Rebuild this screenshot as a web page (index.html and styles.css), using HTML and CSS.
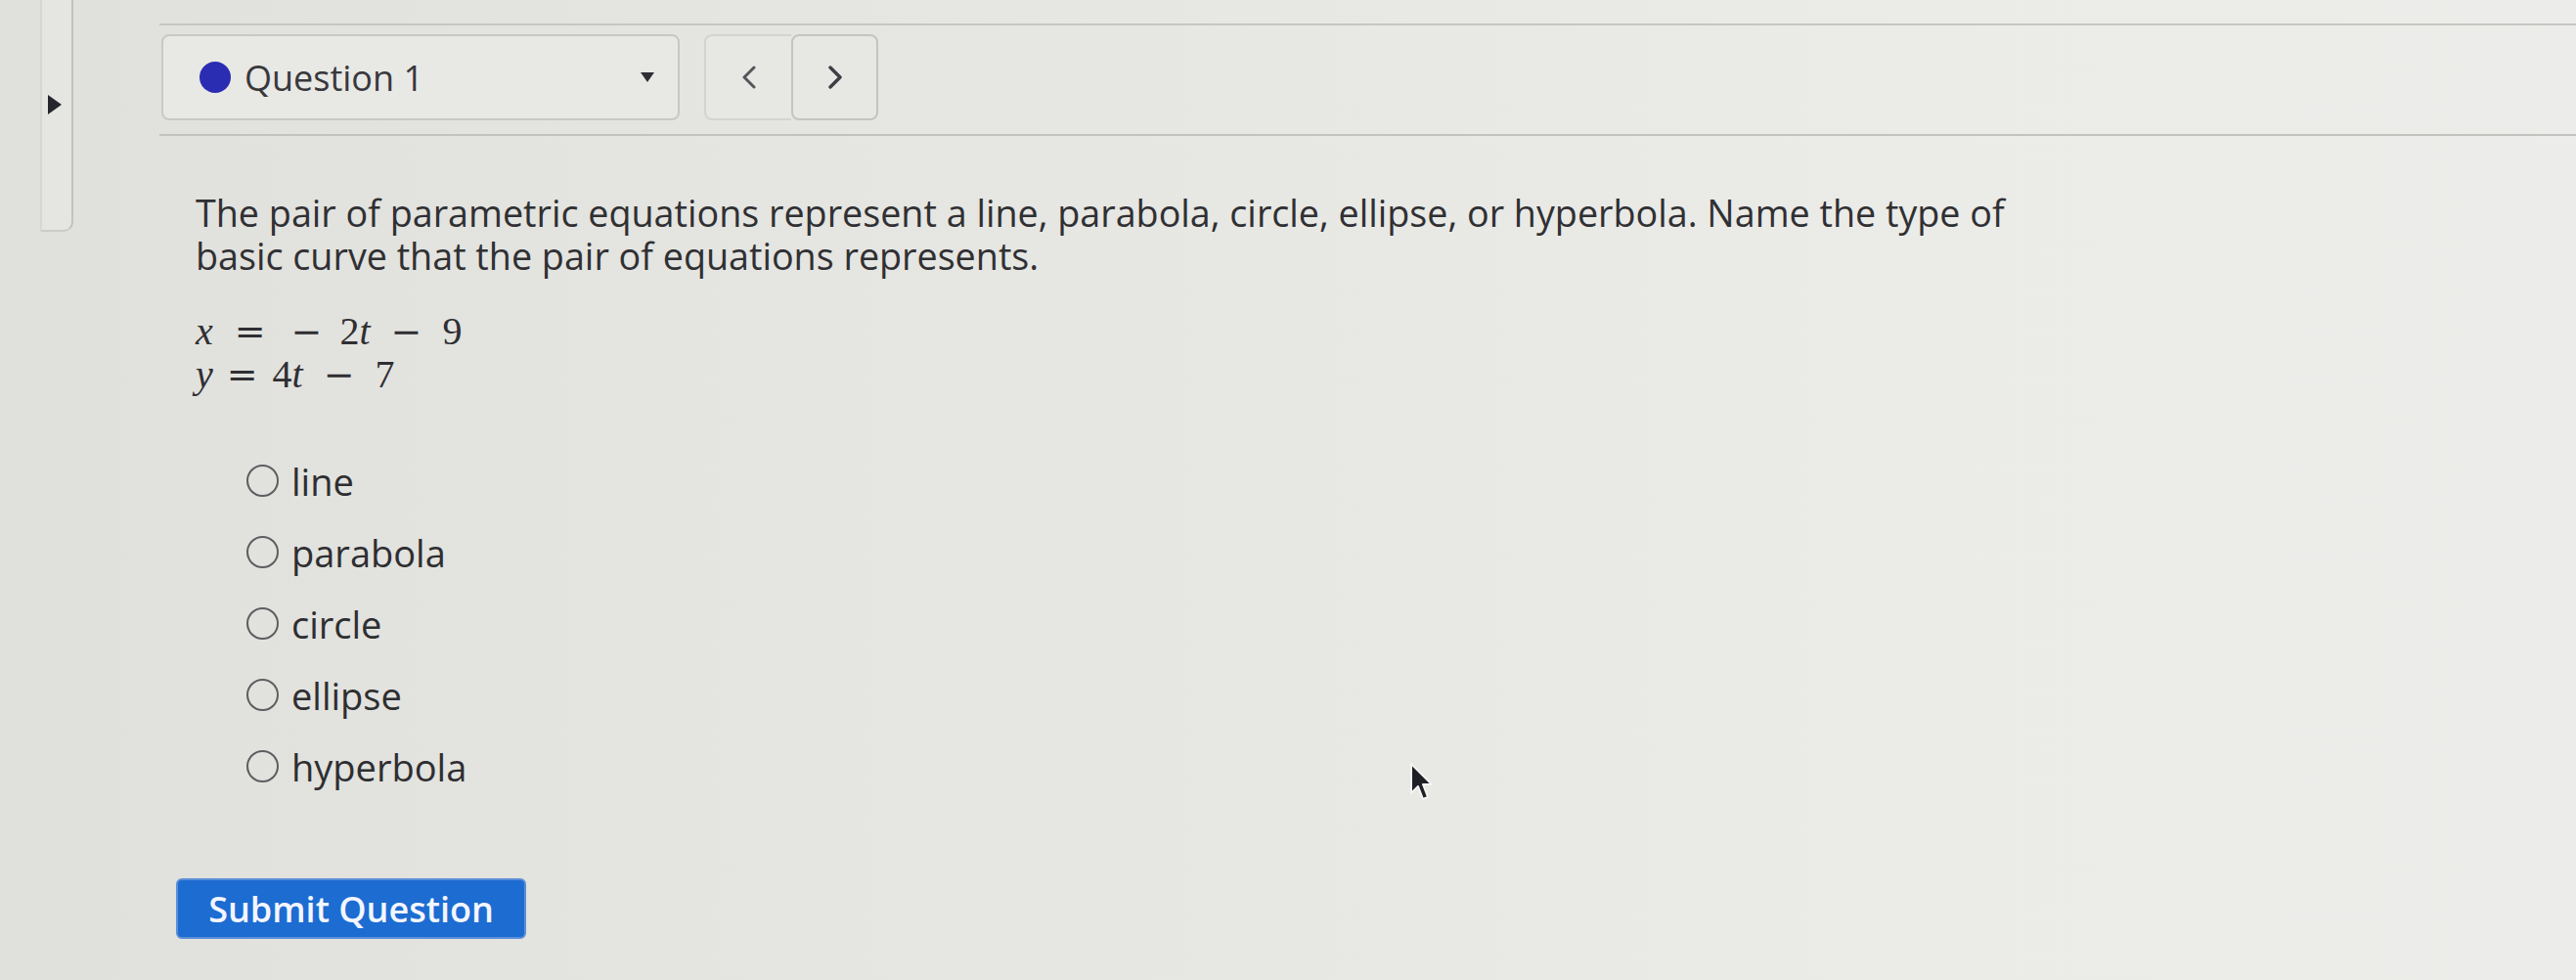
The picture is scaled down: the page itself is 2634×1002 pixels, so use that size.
FILE: index.html
```html
<!DOCTYPE html>
<html lang="en">
<head>
    <meta charset="UTF-8">
    <meta name="viewport" content="width=device-width, initial-scale=1.0">
    <title>Question 1</title>
    <link rel="stylesheet" href="styles.css">
</head>
<body>
  <div class="page">
    <aside class="sidebar">
      <span class="sidebar-toggle"></span>
    </aside>
    <main class="main">
      <div class="question-nav">
        <div class="question-select">
          <span class="status-dot"></span>
          <span class="question-label">Question 1</span>
          <span class="caret"></span>
        </div>
        <div class="nav-buttons">
          <button class="nav-btn prev" aria-label="Previous question">
            <svg width="16" height="24" viewBox="0 0 16 24"><path d="M13 2 L3 12 L13 22" fill="none" stroke="#55555a" stroke-width="3" stroke-linecap="round" stroke-linejoin="round"/></svg>
          </button>
          <button class="nav-btn next" aria-label="Next question">
            <svg width="16" height="24" viewBox="0 0 16 24"><path d="M3 2 L13 12 L3 22" fill="none" stroke="#3e3e44" stroke-width="3.4" stroke-linecap="round" stroke-linejoin="round"/></svg>
          </button>
        </div>
      </div>

      <div class="question-body">
        <p class="prompt">The pair of parametric equations represent a line, parabola, circle, ellipse, or hyperbola. Name the type of basic curve that the pair of equations represents.</p>

        <div class="math">
          <div class="eq">
            <span class="mi">x</span><span class="mo rel">=</span><span class="mo unary">&minus;</span><span class="mn">2</span><span class="mi">t</span><span class="mo bin">&minus;</span><span class="mn">9</span>
          </div>
          <div class="eq">
            <span class="mi">y</span><span class="mo rel tight">=</span><span class="mn">4</span><span class="mi">t</span><span class="mo bin">&minus;</span><span class="mn">7</span>
          </div>
        </div>

        <ul class="choices">
          <li><span class="radio"></span>line</li>
          <li><span class="radio"></span>parabola</li>
          <li><span class="radio"></span>circle</li>
          <li><span class="radio"></span>ellipse</li>
          <li><span class="radio"></span>hyperbola</li>
        </ul>

        <button class="submit-btn">Submit Question</button>
      </div>
    </main>
  </div>

  <svg class="cursor" width="26" height="42" viewBox="0 0 26 42">
    <path d="M2 2 L2 32 L9 25 L14 38 L19 36 L14 23 L23 23 Z" fill="#1f1f26" stroke="#f4f4f4" stroke-width="2" stroke-linejoin="round"/>
  </svg>
</body>
</html>
```

FILE: styles.css
```css
body {
  margin: 0;
  width: 2634px;
  height: 1002px;
  overflow: hidden;
  font-family: 'Open Sans', 'Noto Sans', sans-serif;
  color: #303033;
  background: linear-gradient(90deg, #e0e0dc 0%, #e6e6e2 40%, #ebebe8 75%, #ececea 100%);
  position: relative;
}
.page {
  display: flex;
  align-items: flex-start;
}
.sidebar {
  box-sizing: border-box;
  width: 34px;
  height: 237px;
  margin-left: 41px;
  border-left: 2px solid #d6d6d2;
  border-right: 2px solid #c2c2be;
  border-bottom: 2px solid #cbcbc7;
  border-radius: 0 0 10px 0;
  background-color: #e5e5e1;
  padding: 97px 0 0 6px;
}
.sidebar-toggle {
  display: block;
  width: 0;
  height: 0;
  border-left: 14px solid #25252d;
  border-top: 10px solid transparent;
  border-bottom: 10px solid transparent;
}
.main {
  flex: 1;
  margin-left: 88px;
  padding-top: 24px;
}
.question-nav {
  display: flex;
  gap: 25px;
  padding: 9px 0 14px 2px;
  border-top: 2px solid #c6c6c2;
  border-bottom: 2px solid #c2c2be;
}
.question-select {
  box-sizing: border-box;
  width: 530px;
  height: 88px;
  display: flex;
  align-items: center;
  padding-left: 37px;
  border: 2px solid #c8c8c4;
  border-radius: 8px;
  background-color: #e8e8e5;
}
.status-dot {
  width: 32px;
  height: 32px;
  border-radius: 50%;
  background-color: #2a2db2;
  margin-right: 14px;
}
.question-label {
  font-size: 36px;
  color: #38383c;
}
.caret {
  margin-left: auto;
  margin-right: 24px;
  width: 0;
  height: 0;
  border-left: 7px solid transparent;
  border-right: 7px solid transparent;
  border-top: 10px solid #2e2e34;
}
.nav-buttons {
  display: flex;
}
.nav-btn {
  box-sizing: border-box;
  width: 89px;
  height: 88px;
  display: flex;
  align-items: center;
  justify-content: center;
  background-color: #e7e7e4;
  border: 2px solid #c4c4c0;
  border-radius: 8px;
  padding: 0;
}
.nav-btn.prev {
  border-color: #d4d4d0;
  border-right: none;
  border-radius: 8px 0 0 8px;
}
.question-body {
  padding-left: 37px;
}
.prompt {
  margin: 57px 0 0 0;
  max-width: 1900px;
  font-size: 37.7px;
  line-height: 44px;
}
.math {
  margin-top: 33px;
  font-family: 'Liberation Serif', serif;
  font-size: 40px;
  line-height: 44px;
  color: #2f2f33;
}
.eq {
  white-space: nowrap;
}
.mi {
  font-style: italic;
}
.mo {
  font-family: 'DejaVu Serif', serif;
  font-size: 38px;
}
.mo.rel {
  margin: 0 26px 0 22px;
}
.mo.rel.tight {
  margin: 0 15px 0 14px;
}
.mo.unary {
  margin-right: 18px;
}
.mo.bin {
  margin: 0 21px;
}
.choices {
  list-style: none;
  margin: 50px 0 0 0;
  padding: 0 0 0 52px;
}
.choices li {
  height: 73px;
  display: flex;
  align-items: center;
  font-size: 38px;
  color: #2e2e31;
}
.radio {
  box-sizing: border-box;
  width: 33px;
  height: 33px;
  border: 2.5px solid #5e5e62;
  border-radius: 50%;
  margin-right: 13px;
}
.submit-btn {
  display: block;
  box-sizing: border-box;
  width: 358px;
  height: 62px;
  margin: 78px 0 0 -20px;
  padding: 0;
  font-family: 'Open Sans', sans-serif;
  font-size: 36px;
  font-weight: 600;
  color: #f4f6ff;
  background-color: #1c6cd2;
  border: 2px solid #5c8fd8;
  border-radius: 6px;
}
.cursor {
  position: absolute;
  left: 1441px;
  top: 779px;
}
```
